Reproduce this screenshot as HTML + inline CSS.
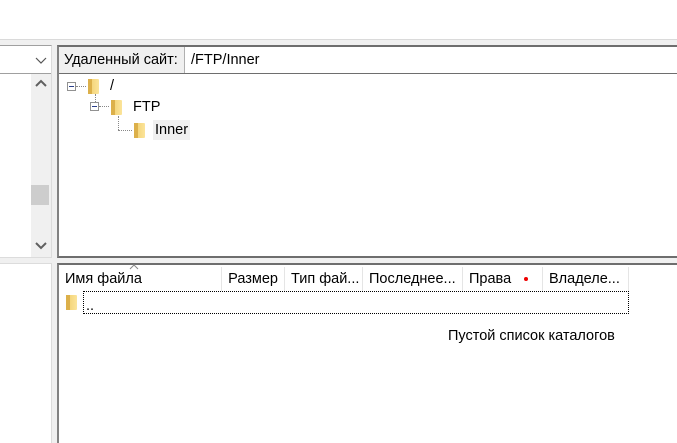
<!DOCTYPE html>
<html><head><meta charset="utf-8"><style>
*{margin:0;padding:0;box-sizing:border-box}
body{width:677px;height:443px;overflow:hidden;background:#f0f0f0;font-family:"Liberation Sans","DejaVu Sans",sans-serif;font-size:14.5px;color:#000;position:relative}
.a{position:absolute}
.fold{position:absolute;width:11px;height:15px;background:linear-gradient(90deg,#e9c25a 0,#f5d77e 40%,#fbe49a 100%);border-radius:1px}
.fold:before{content:"";position:absolute;left:0;top:0;width:4px;height:15px;background:#dcb04a}
.hdr{position:absolute;top:267px;height:24px;line-height:24px;border-right:1px solid #e5e5e5;padding-left:6px;white-space:nowrap;overflow:hidden;font-size:14.5px}
</style></head><body>
<div class="a" style="left:0;top:0;width:677px;height:39px;background:#fff"></div>
<div class="a" style="left:0;top:39px;width:677px;height:1px;background:#dadada"></div>
<div class="a" style="left:0;top:45px;width:52px;height:213px;background:#fff;border-top:1px solid #a0a0a0;border-right:1px solid #dcdcdc;border-bottom:1px solid #dcdcdc"></div>
<div class="a" style="left:0;top:73px;width:51px;height:1px;background:#a0a0a0"></div>
<svg class="a" style="left:35px;top:55px" width="12" height="10"><path d="M1 3 L6 8 L11 3" fill="none" stroke="#555" stroke-width="1.2"/></svg>
<div class="a" style="left:31px;top:74px;width:20px;height:183px;background:#f0f0f0"></div>
<svg class="a" style="left:35px;top:79px" width="12" height="10"><path d="M1 7 L6 2 L11 7" fill="none" stroke="#606060" stroke-width="2"/></svg>
<div class="a" style="left:31px;top:185px;width:18px;height:20px;background:#cdcdcd"></div>
<svg class="a" style="left:35px;top:240px" width="12" height="10"><path d="M1 3 L6 8 L11 3" fill="none" stroke="#606060" stroke-width="2"/></svg>
<div class="a" style="left:57px;top:45px;width:620px;height:213px;background:#fff;border-left:2px solid #828282;border-top:2px solid #6e6e6e;border-bottom:2px solid #6e6e6e"></div>
<div class="a" style="left:59px;top:47px;width:125px;height:26px;background:#f0f0f0;line-height:26px;padding-left:5px;white-space:nowrap">Удаленный сайт:</div>
<div class="a" style="left:184px;top:47px;width:493px;height:26px;border-left:1px solid #b0b0b0;line-height:26px;padding-left:6px">/FTP/Inner</div>
<div class="a" style="left:59px;top:73px;width:618px;height:1px;background:#6e6e6e"></div>
<div class="a" style="left:67px;top:82px;width:9px;height:9px;border:1px solid #919191"></div>
<div class="a" style="left:69px;top:86px;width:5px;height:1px;background:#2a3f8a"></div>
<div class="a" style="left:76px;top:86px;width:10px;border-top:1px dotted #888"></div>
<div class="fold" style="left:88px;top:79px"></div>
<div class="a" style="left:110px;top:77px;line-height:18px">/</div>
<div class="a" style="left:95px;top:94px;height:8px;border-left:1px dotted #888"></div>
<div class="a" style="left:90px;top:102px;width:9px;height:9px;border:1px solid #919191"></div>
<div class="a" style="left:92px;top:106px;width:5px;height:1px;background:#2a3f8a"></div>
<div class="a" style="left:99px;top:106px;width:10px;border-top:1px dotted #888"></div>
<div class="fold" style="left:111px;top:100px"></div>
<div class="a" style="left:133px;top:98px;line-height:18px">FTP</div>
<div class="a" style="left:118px;top:116px;height:14px;border-left:1px dotted #888"></div>
<div class="a" style="left:118px;top:130px;width:14px;border-top:1px dotted #888"></div>
<div class="fold" style="left:134px;top:123px"></div>
<div class="a" style="left:153px;top:120px;width:37px;height:20px;background:#f0f0f0;line-height:20px;padding-left:2px">Inner</div>
<div class="a" style="left:0;top:263px;width:52px;height:180px;background:#fff;border-top:1px solid #dcdcdc;border-right:1px solid #dcdcdc"></div>
<div class="a" style="left:57px;top:263px;width:620px;height:180px;background:#fff;border-left:2px solid #828282;border-top:2px solid #6e6e6e"></div>
<svg class="a" style="left:129px;top:264px" width="10" height="6"><path d="M1 5 L5 1 L9 5" fill="none" stroke="#888" stroke-width="1"/></svg>
<div class="hdr" style="left:59px;width:163px">Имя файла</div>
<div class="hdr" style="left:222px;width:63px;text-align:right;padding-right:6px;padding-left:0">Размер</div>
<div class="hdr" style="left:285px;width:78px">Тип фай...</div>
<div class="hdr" style="left:363px;width:100px">Последнее...</div>
<div class="hdr" style="left:463px;width:80px">Права</div>
<div class="a" style="left:524px;top:277px;width:4px;height:4px;border-radius:50%;background:#e00"></div>
<div class="hdr" style="left:543px;width:86px">Владеле...</div>
<div class="fold" style="left:66px;top:295px"></div>
<div class="a" style="left:83px;top:291px;width:546px;height:23px;border:1px dotted #000;line-height:28px;padding-left:2px">..</div>
<div class="a" style="left:448px;top:327px;line-height:18px;white-space:nowrap">Пустой список каталогов</div>
</body></html>
